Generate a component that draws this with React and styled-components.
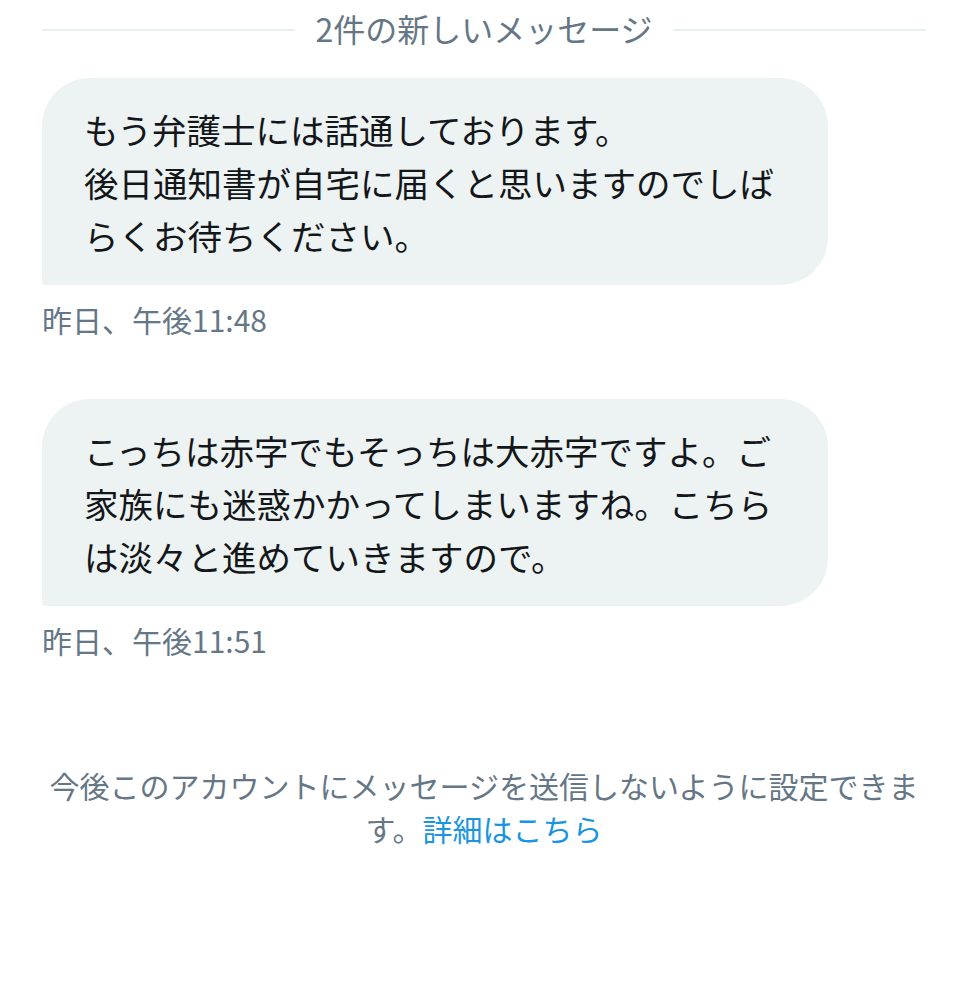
import React from 'react';
import styled, { createGlobalStyle } from 'styled-components';

const GlobalStyle = createGlobalStyle`
  body {
    margin: 0;
    background: #ffffff;
    font-family: "Noto Sans CJK JP", "Noto Sans", sans-serif;
  }
`;

const messages = [
  {
    id: 1,
    lines: ['もう弁護士には話通しております。', '後日通知書が自宅に届くと思いますのでしばらくお待ちください。'],
    time: '昨日、午後11:48',
  },
  {
    id: 2,
    lines: ['こっちは赤字でもそっちは大赤字ですよ。ご家族にも迷惑かかってしまいますね。こちらは淡々と進めていきますので。'],
    time: '昨日、午後11:51',
  },
];

const App = () => (
  <Page>
    <GlobalStyle />
    <Divider>
      <Rule />
      <DividerLabel>2件の新しいメッセージ</DividerLabel>
      <Rule />
    </Divider>

    {messages.map((msg, i) => (
      <MessageGroup key={msg.id} $first={i === 0}>
        <Bubble>
          {msg.lines.map((line) => (
            <BubbleLine key={line}>{line}</BubbleLine>
          ))}
        </Bubble>
        <Timestamp>{msg.time}</Timestamp>
      </MessageGroup>
    ))}

    <Notice>
      <NoticeLine>今後このアカウントにメッセージを送信しないように設定できま</NoticeLine>
      <NoticeLine>
        す。<NoticeLink href="#">詳細はこちら</NoticeLink>
      </NoticeLine>
    </Notice>
  </Page>
);

const Page = styled.div`
  padding: 0 42px 120px;
  display: flex;
  flex-direction: column;
`;

const Divider = styled.div`
  display: flex;
  align-items: center;
  gap: 20px;
  height: 56px;
`;

const Rule = styled.div`
  flex: 1;
  height: 2px;
  margin-top: 4px;
  background: #e9eef1;
`;

const DividerLabel = styled.span`
  font-size: 32px;
  line-height: 56px;
  color: #657786;
  white-space: nowrap;
`;

const MessageGroup = styled.div`
  display: flex;
  flex-direction: column;
  align-items: flex-start;
  margin-top: ${(p) => (p.$first ? '22px' : '62px')};
`;

const Bubble = styled.div`
  box-sizing: border-box;
  width: 786px;
  padding: 25px 54px 23px 42px;
  background: #edf2f3;
  border-radius: 48px 48px 48px 4px;
  color: #14171a;
  font-size: 34.5px;
  line-height: 53px;
`;

const BubbleLine = styled.div``;

const Timestamp = styled.div`
  margin-top: 16px;
  font-size: 30px;
  line-height: 36px;
  color: #657786;
`;

const Notice = styled.div`
  margin-top: 106px;
  display: flex;
  flex-direction: column;
  align-items: center;
  font-size: 30px;
  line-height: 43px;
  color: #657786;
`;

const NoticeLine = styled.div`
  white-space: nowrap;
`;

const NoticeLink = styled.a`
  color: #1b95e0;
  text-decoration: none;
`;

export default App;
